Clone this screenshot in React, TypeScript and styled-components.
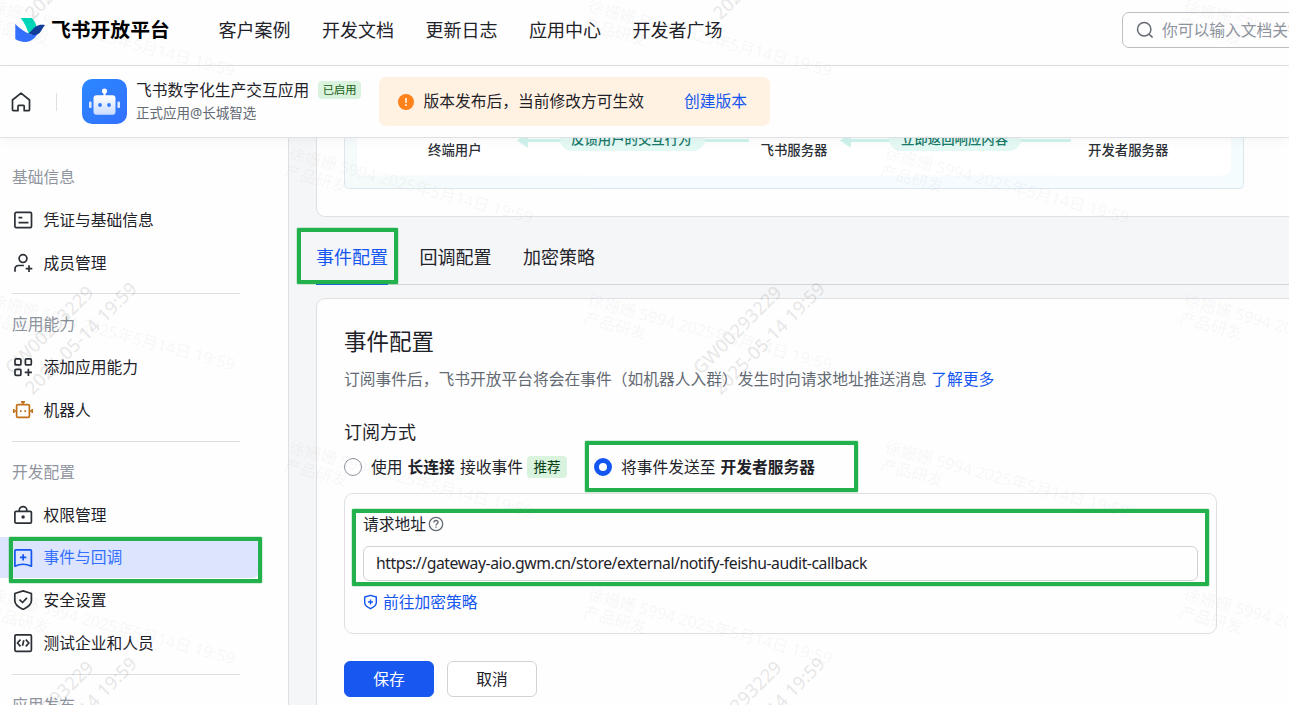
import React from 'react';
import styled, { createGlobalStyle, css } from 'styled-components';

const sans = `"Noto Sans", "Noto Sans CJK SC", sans-serif`;
const cjk = `"Noto Sans CJK SC", sans-serif`;

const GlobalStyle = createGlobalStyle`
  *, *::before, *::after { box-sizing: border-box; }
  body { margin: 0; background: #fefefe; color: #1f2329; font-family: ${sans}; overflow: hidden; }
  button, input { font-family: inherit; }
`;

const Page = styled.div`
  position: relative;
  width: 100%;
  height: 705px;
  display: flex;
  flex-direction: column;
  overflow: hidden;
  font-size: 15.75px;
  line-height: 24px;
`;

/* ---------- top navigation ---------- */
const TopNav = styled.header`
  flex: none;
  height: 66px;
  border-bottom: 1px solid #dee0e3;
  display: flex;
  align-items: center;
  padding: 0 0 5px 15px;
  white-space: nowrap;
`;
const Brand = styled.div`
  display: flex;
  align-items: center;
  gap: 6px;
  width: 203.5px;
  svg { flex: none; }
`;
const BrandName = styled.span`
  font-size: 19.8px;
  font-weight: 700;
  color: #000;
`;
const NavLinks = styled.nav`
  display: flex;
  gap: 31.5px;
  font-size: 18px;
`;
const SearchBox = styled.div`
  flex: none;
  margin-left: auto;
  margin-right: -90px;
  width: 257px;
  height: 36px;
  border: 1px solid #bbbfc4;
  border-radius: 7px;
  display: flex;
  align-items: center;
  gap: 8px;
  padding-left: 13px;
  color: #8f959e;
`;

/* ---------- application bar ---------- */
const AppBar = styled.div`
  position: relative;
  z-index: 1;
  flex: none;
  height: 72px;
  border-bottom: 1px solid #dee0e3;
  background: #fefefe;
  box-shadow: 0 3px 10px rgba(31, 35, 41, 0.04);
  display: flex;
  align-items: center;
  padding-left: 11px;
  white-space: nowrap;
`;
const BarDivider = styled.i`
  width: 1px;
  height: 18px;
  margin: 0 25px 0 25px;
  background: #dee0e3;
`;
const AppInfo = styled.div`
  margin-left: 9px;
  width: 243px;
  padding-bottom: 1px;
`;
const AppNameRow = styled.div`
  display: flex;
  align-items: center;
  gap: 9px;
  height: 24px;
`;
const AppOwner = styled.div`
  font-size: 13.5px;
  line-height: 22px;
  color: #646a73;
`;
const Tag = styled.span<{ $large?: boolean }>`
  display: inline-block;
  border-radius: 4px;
  background: #d9f3de;
  color: ${(p) => (p.$large ? '#0a3f16' : '#186010')};
  font-size: ${(p) => (p.$large ? '13.5px' : '11.25px')};
  line-height: ${(p) => (p.$large ? '22px' : '18px')};
  padding: 0 ${(p) => (p.$large ? '6.5px' : '4.6px')};
`;
const Banner = styled.div`
  width: 391px;
  height: 49px;
  border-radius: 7px;
  background: #fff2e3;
  display: flex;
  align-items: center;
  padding-left: 19px;
  a { margin-left: 40px; }
  svg { margin-right: 9.5px; }
  span, a { padding-bottom: 2px; }
`;
const Link = styled.a`
  color: #1456f0;
`;

/* ---------- body ---------- */
const Body = styled.div`
  flex: 1;
  min-height: 0;
  display: flex;
`;
const Sidebar = styled.aside`
  flex: none;
  width: 289px;
  border-right: 1px solid #dee0e3;
  padding-top: 8.4px;
  overflow: hidden;
`;
const Group = styled.section`
  padding-top: 18.4px;
`;
const GroupTitle = styled.div`
  padding-left: 12px;
  margin-bottom: 10.8px;
  color: #8f959e;
`;
const GroupItems = styled.div`
  display: grid;
  gap: 2.25px;
`;
const GroupRule = styled.div`
  height: 1px;
  width: 228px;
  margin: 10.15px 0 0 12px;
  background: #dcdee1;
`;
const Item = styled.div<{ $active?: boolean }>`
  height: 40.5px;
  width: 259px;
  display: flex;
  align-items: center;
  gap: 10.5px;
  padding-left: 13px;
  border-radius: 0 7px 7px 0;
  color: #1f2329;
  ${(p) => p.$active && css`
    background: #dce5fd;
    color: #3370ff;
    span { padding-bottom: 2px; }
  `}
`;

const Main = styled.main`
  flex: 1;
  min-width: 0;
  background: #f5f6f7;
  padding-left: 27px;
  overflow: hidden;
`;
const FlowCard = styled.section`
  height: 79px;
  width: 1000px;
  border: 1px solid #dee0e3;
  border-top: 0;
  border-radius: 0 0 0 9px;
  background: #fefefe;
  padding-left: 27px;
`;
const Tabs = styled.div`
  height: 68px;
  border-bottom: 1px solid #d2d4d8;
  display: flex;
  gap: 31.5px;
  font-size: 18px;
  margin-bottom: 13px;
`;
const Tab = styled.div<{ $active?: boolean }>`
  height: 68px;
  padding-top: 28px;
  color: ${(p) => (p.$active ? '#1456f0' : '#1f2329')};
  border-bottom: ${(p) => (p.$active ? '2px solid #1456f0' : '0')};
`;
const ConfigCard = styled.section`
  width: 1000px;
  height: 460px;
  border: 1px solid #dee0e3;
  border-radius: 9px 0 0 0;
  background: #fefefe;
  padding: 27px 0 0 27px;
`;
const Title = styled.h2`
  margin: 0;
  font-size: 22.5px;
  line-height: 32px;
  font-weight: 400;
`;
const Desc = styled.p`
  margin: 9px 0 0;
  color: #646a73;
  white-space: nowrap;
  a { margin-left: 4.5px; }
`;
const SubTitle = styled.h3`
  margin: 29px 0 0;
  font-size: 18px;
  line-height: 24px;
  font-weight: 400;
`;
const Options = styled.div`
  display: flex;
  align-items: center;
  height: 24px;
  margin-top: 11px;
  white-space: nowrap;
`;
const Option = styled.label`
  display: flex;
  align-items: center;
  width: 250px;
  b { margin: 0 1px; }
  ${Tag} { margin-left: 4px; }
`;
const Radio = styled.i<{ $checked?: boolean }>`
  width: 18px;
  height: 18px;
  border-radius: 50%;
  margin-right: 9px;
  background: #fff;
  border: ${(p) => (p.$checked ? '5.6px solid #1456f0' : '1px solid #8f959e')};
`;
const Panel = styled.div`
  width: 873px;
  height: 141px;
  margin-top: 14px;
  border: 1px solid #dee0e3;
  border-radius: 9px;
  padding: 18px 18px 0;
`;
const FieldLabel = styled.div`
  display: flex;
  align-items: center;
  gap: 2px;
`;
const UrlInput = styled.div`
  margin-top: 10px;
  height: 35px;
  border: 1px solid #d0d3d6;
  border-radius: 6px;
  padding-left: 12px;
  line-height: 33px;
  letter-spacing: -0.45px;
`;
const PolicyLink = styled(Link)`
  display: flex;
  align-items: center;
  gap: 5px;
  margin-top: 9px;
`;
const Actions = styled.div`
  display: flex;
  gap: 13px;
  margin-top: 27px;
`;
const Button = styled.button<{ $primary?: boolean }>`
  width: 90px;
  height: 36px;
  padding: 0 0 2px;
  border-radius: 6px;
  font-size: 15.75px;
  border: 1px solid ${(p) => (p.$primary ? '#1858f0' : '#d0d3d6')};
  background: ${(p) => (p.$primary ? '#1858f0' : '#fff')};
  color: ${(p) => (p.$primary ? '#fff' : '#1f2329')};
`;

/* ---------- overlays ---------- */
const Overlay = styled.div`
  position: absolute;
  inset: 0;
  z-index: 5;
  overflow: hidden;
  pointer-events: none;
`;
const Highlight = styled.div<{ $x: number; $y: number; $w: number; $h: number }>`
  position: absolute;
  left: ${(p) => p.$x}px;
  top: ${(p) => p.$y}px;
  width: ${(p) => p.$w}px;
  height: ${(p) => p.$h}px;
  border: 4px solid #22b14c;
  border-radius: 1px;
  box-shadow: 0 0 0 0.5px rgba(34, 177, 76, 0.4);
`;
const UserMark = styled.div<{ $x: number; $y: number }>`
  position: absolute;
  left: ${(p) => p.$x}px;
  top: ${(p) => p.$y}px;
  transform: rotate(15deg);
  transform-origin: 0 0;
  white-space: pre;
  font-size: 16.1px;
  line-height: 18px;
  color: rgba(31, 35, 41, 0.055);
`;
const DeviceMark = styled.div<{ $x: number; $y: number }>`
  position: absolute;
  left: ${(p) => p.$x}px;
  top: ${(p) => p.$y}px;
  transform: rotate(-45deg);
  transform-origin: 0 0;
  white-space: pre;
  font-size: 18.6px;
  line-height: 28px;
  font-weight: 500;
  color: rgba(31, 35, 41, 0.115);
  -webkit-text-stroke: 0.4px rgba(31, 35, 41, 0.05);
`;

/* ---------- drawings ---------- */
const Logo = () => (
  <svg width="30" height="26" viewBox="0 0 30 26">
    <path d="M5.500 1h11.200c2.500 2.300 4 5 4.800 8.200L14 17.500C11.800 11 9.500 5.500 5.500 1z" fill="#00d6b9" />
    <path d="M.3 7c4.500 4.600 9 7.800 13.700 9.800 2.300 1 6.500 1.300 8.500.3C20 21.500 16 25 10.500 25 6.300 25 2.500 23.600.3 22z" fill="#3370ff" />
    <path d="M30 8.200c-2.200 2.200-3.400 5.300-5.200 7.500-3 3.300-7.500 2.600-11.300.8 2.500-2.200 4.600-5.100 7.300-7 2.900-2 6.400-2.100 9.200-1.300z" fill="#133c9a" />
  </svg>
);

const SearchIcon = () => (
  <svg width="18" height="18" viewBox="0 0 18 18" fill="none" stroke="#646a73" strokeWidth="1.500" strokeLinecap="round">
    <circle cx="8.200" cy="8.200" r="6.700" />
    <path d="M13.200 13.200l3 2.900" />
  </svg>
);

const HomeIcon = () => (
  <svg width="20" height="20" viewBox="0 0 20 20" fill="none" stroke="#2b2f36" strokeWidth="1.700" strokeLinejoin="round">
    <path d="M1.500 8L10 1.200 18.500 8v9.700q0 1-1 1h-4.300v-4.500q0-.8-.8-.8H7.800q-.8 0-.8.8v4.500H2.500q-1 0-1-1z" />
  </svg>
);

const RobotAvatar = () => (
  <svg width="45" height="45" viewBox="0 0 45 45">
    <defs>
      <linearGradient id="avatarBg" x1="0" y1="0" x2="1" y2="1">
        <stop offset="0" stopColor="#2a88ff" />
        <stop offset="1" stopColor="#3370ff" />
      </linearGradient>
      <linearGradient id="avatarFace" x1="0" y1="0" x2="0" y2="1">
        <stop offset="0" stopColor="#fff" />
        <stop offset="1" stopColor="#c9dcff" />
      </linearGradient>
    </defs>
    <rect width="45" height="45" rx="10" fill="url(#avatarBg)" />
    <circle cx="22.500" cy="12" r="2.600" fill="#fff" />
    <rect x="21.500" y="12" width="2" height="6" fill="#fff" />
    <rect x="11.500" y="16.300" width="22" height="19.500" rx="3" fill="url(#avatarFace)" />
    <rect x="7" y="22.500" width="2.600" height="6.500" rx="1" fill="#dce8ff" />
    <rect x="35.400" y="22.500" width="2.600" height="6.500" rx="1" fill="#dce8ff" />
    <circle cx="18" cy="26" r="1.900" fill="#3378ff" />
    <circle cx="27" cy="26" r="1.900" fill="#3378ff" />
  </svg>
);

const WarningIcon = () => (
  <svg width="16" height="16" viewBox="0 0 16 16">
    <circle cx="8" cy="8" r="8" fill="#ff811a" />
    <path d="M8 4v5" stroke="#fff3e6" strokeWidth="1.700" />
    <path d="M8 10.300v1.700" stroke="#fff3e6" strokeWidth="1.700" />
  </svg>
);

const HelpIcon = () => (
  <svg width="16" height="16" viewBox="0 0 16 16" fill="none" stroke="#646a73" strokeWidth="1.300">
    <circle cx="8" cy="8" r="6.700" />
    <path d="M5.900 6.500c0-1.300.9-2 2.100-2s2.100.8 2.100 1.900c0 1.400-2.100 1.500-2.100 3" />
    <path d="M8 10.500v1.300" />
  </svg>
);

const PolicyIcon = () => (
  <svg width="15" height="16" viewBox="0 0 15 16" fill="none" stroke="#1456f0" strokeWidth="1.400" strokeLinejoin="round">
    <path d="M7.500 1.300L13.300 3v5.500c0 2.700-2.500 4.700-5.800 6.200-3.300-1.500-5.800-3.500-5.800-6.200V3z" />
    <path d="M7.500 5.500v5M5 8h5" />
  </svg>
);

type IconName = 'card' | 'member' | 'add' | 'bot' | 'lock' | 'event' | 'shield' | 'code';

const iconShapes: Record<IconName, React.ReactNode> = {
  card: (
    <>
      <rect x="1.900" y="2.400" width="16.600" height="15.200" rx="1.200" />
      <path d="M5.500 7.600h3.800M5.500 12.600h10" />
    </>
  ),
  member: (
    <>
      <circle cx="10" cy="5.600" r="3.900" />
      <path d="M2 18.800v-2.600q0-3.700 3.700-3.700h5.200M16 12.300v6.600M12.700 15.600h6.600" />
    </>
  ),
  add: (
    <>
      <rect x="2" y="1.900" width="5.900" height="6" rx="1" />
      <rect x="12.400" y="1.900" width="5.900" height="6" rx="1" />
      <rect x="2" y="12.300" width="5.900" height="6" rx="1" />
      <path d="M15.400 11.700v7.200M11.700 15.300h7.200" />
    </>
  ),
  bot: (
    <>
      <rect x="3.600" y="4.600" width="12.800" height="12.800" rx="1.200" />
      <path d="M10 1v3.500M8 1.800h4M.7 9v4M19.300 9v4M.7 11h2.900M16.400 11h2.900M7.800 10.200v1.800M12.200 10.200v1.800" />
    </>
  ),
  lock: (
    <>
      <rect x="1.900" y="6.300" width="16.500" height="11.800" rx="1.200" />
      <path d="M6.300 6V5a3.700 3.400 0 0 1 7.500 0v1" />
      <circle cx="10.100" cy="12" r=".9" fill="currentColor" />
    </>
  ),
  event: (
    <>
      <path d="M1.900 18.200V2.900q0-1 1-1h14.500q1 0 1 1v15.300c-5.500-2.600-11-2.600-16.500 0z" />
      <path d="M10.150 6.200v6.200M7 9.300h6.300" />
    </>
  ),
  shield: (
    <>
      <path d="M10.100.9l8.300 2.600v7.300c0 3.800-3.500 6.400-8.300 8.600-4.800-2.200-8.300-4.800-8.300-8.600V3.500z" />
      <path d="M6.500 9.700l3 2.800 4.400-4.700" />
    </>
  ),
  code: (
    <>
      <rect x="1.900" y="1.800" width="16.500" height="16.500" rx="1.200" />
      <path d="M7.500 6.700L4.400 10l3.100 3.300M12.800 6.700l3.100 3.300-3.100 3.300M10.800 7.300l-1.300 5.400" />
    </>
  ),
};

const iconTone: Partial<Record<IconName, string>> = { bot: '#c07118', event: '#1456f0' };

const MenuIcon = ({ name }: { name: IconName }) => (
  <svg width="20" height="20" viewBox="0 0 20 20" fill="none" color={iconTone[name] ?? '#2b2f36'} stroke="currentColor" strokeWidth="1.700" strokeLinejoin="round">
    {iconShapes[name]}
  </svg>
);

const FlowDiagram = () => (
  <svg width="900" height="51" viewBox="0 0 900 51" fontFamily={cjk} fontSize="13.400" fontWeight="500">
    <defs>
      <linearGradient id="flowBg" x1="0" x2="1" y1="0" y2="0">
        <stop offset="0" stopColor="#f5fbfb" />
        <stop offset="0.400" stopColor="#f6fbff" />
        <stop offset="1" stopColor="#f5fcfe" />
      </linearGradient>
    </defs>
    <rect x=".5" y="-20" width="899" height="70.500" rx="4" fill="url(#flowBg)" stroke="#dfe7ee" />
    <rect x="13" y="-20" width="874" height="57.500" rx="8" fill="#fff" />
    <g fill="#cff3ec">
      <rect x="180" y="1" width="225" height="3" rx="1" />
      <path d="M173 2.500L184-6v16z" />
      <rect x="504" y="1" width="223" height="3" rx="1" />
      <path d="M496 2.500L507-6v16z" />
    </g>
    <g fill="#e4f8f4">
      <rect x="216" y="-12" width="145" height="25" rx="12" />
      <rect x="545" y="-12" width="132" height="25" rx="12" />
    </g>
    <g fill="#187a68">
      <text x="227" y="6.300">反馈用户的交互行为</text>
      <text x="557" y="6.300">立即返回响应内容</text>
    </g>
    <g fill="#2b2f36">
      <text x="84" y="17">终端用户</text>
      <text x="416.500" y="17">飞书服务器</text>
      <text x="744" y="17">开发者服务器</text>
    </g>
  </svg>
);

/* ---------- data ---------- */
const navLinks = ['客户案例', '开发文档', '更新日志', '应用中心', '开发者广场'];

const menu: { title: string; items: { label: string; icon: IconName; active?: boolean }[] }[] = [
  {
    title: '基础信息',
    items: [
      { label: '凭证与基础信息', icon: 'card' },
      { label: '成员管理', icon: 'member' },
    ],
  },
  {
    title: '应用能力',
    items: [
      { label: '添加应用能力', icon: 'add' },
      { label: '机器人', icon: 'bot' },
    ],
  },
  {
    title: '开发配置',
    items: [
      { label: '权限管理', icon: 'lock' },
      { label: '事件与回调', icon: 'event', active: true },
      { label: '安全设置', icon: 'shield' },
      { label: '测试企业和人员', icon: 'code' },
    ],
  },
  { title: '应用发布', items: [] },
];

const userMarks: [number, number][] = [
  [-6, -3], [590.5, -3], [1187, -3],
  [291.5, 144], [888, 144],
  [-6, 291], [590.5, 291], [1187, 291],
  [291.5, 438], [888, 438],
  [-6, 585], [590.5, 585], [1187, 585],
];
const deviceMarks: [number, number][] = [
  [-2, -14], [686, -14], [-2, 361], [686, 361], [-2, 736], [686, 736],
];

export default function App() {
  return (
    <Page>
      <GlobalStyle />
      <TopNav>
        <Brand>
          <Logo />
          <BrandName>飞书开放平台</BrandName>
        </Brand>
        <NavLinks>
          {navLinks.map((l) => <span key={l}>{l}</span>)}
        </NavLinks>
        <SearchBox>
          <SearchIcon />
          <span>你可以输入文档关键词</span>
        </SearchBox>
      </TopNav>

      <AppBar>
        <HomeIcon />
        <BarDivider />
        <RobotAvatar />
        <AppInfo>
          <AppNameRow>
            <span>飞书数字化生产交互应用</span>
            <Tag>已启用</Tag>
          </AppNameRow>
          <AppOwner>正式应用@长城智选</AppOwner>
        </AppInfo>
        <Banner>
          <WarningIcon />
          <span>版本发布后，当前修改方可生效</span>
          <Link>创建版本</Link>
        </Banner>
      </AppBar>

      <Body>
        <Sidebar>
          {menu.map((g) => (
            <Group key={g.title}>
              <GroupTitle>{g.title}</GroupTitle>
              <GroupItems>
                {g.items.map((it) => (
                  <Item key={it.label} $active={it.active}>
                    <MenuIcon name={it.icon} />
                    <span>{it.label}</span>
                  </Item>
                ))}
              </GroupItems>
              <GroupRule />
            </Group>
          ))}
        </Sidebar>

        <Main>
          <FlowCard>
            <FlowDiagram />
          </FlowCard>
          <Tabs>
            <Tab $active>事件配置</Tab>
            <Tab>回调配置</Tab>
            <Tab>加密策略</Tab>
          </Tabs>
          <ConfigCard>
            <Title>事件配置</Title>
            <Desc>
              订阅事件后，飞书开放平台将会在事件（如机器人入群）发生时向请求地址推送消息
              <Link>了解更多</Link>
            </Desc>
            <SubTitle>订阅方式</SubTitle>
            <Options>
              <Option>
                <Radio />
                <span>使用 <b>长连接</b> 接收事件</span>
                <Tag $large>推荐</Tag>
              </Option>
              <Option>
                <Radio $checked />
                <span>将事件发送至 <b>开发者服务器</b></span>
              </Option>
            </Options>
            <Panel>
              <FieldLabel>请求地址<HelpIcon /></FieldLabel>
              <UrlInput>https://gateway-aio.gwm.cn/store/external/notify-feishu-audit-callback</UrlInput>
              <PolicyLink><PolicyIcon />前往加密策略</PolicyLink>
            </Panel>
            <Actions>
              <Button $primary>保存</Button>
              <Button>取消</Button>
            </Actions>
          </ConfigCard>
        </Main>
      </Body>

      <Overlay>
        {userMarks.map(([x, y]) => (
          <UserMark key={`${x},${y}`} $x={x} $y={y}>{'徐姗姗 5994 2025年5月14日 19:59\n产品研发'}</UserMark>
        ))}
        {deviceMarks.map(([x, y]) => (
          <DeviceMark key={`${x},${y}`} $x={x} $y={y}>{'GW00293229\n2025-05-14 19:59'}</DeviceMark>
        ))}
        <Highlight $x={297} $y={228} $w={101} $h={56} />
        <Highlight $x={9} $y={537} $w={253} $h={46} />
        <Highlight $x={585} $y={441} $w={273} $h={51} />
        <Highlight $x={352} $y={509} $w={857} $h={77} />
      </Overlay>
    </Page>
  );
}
